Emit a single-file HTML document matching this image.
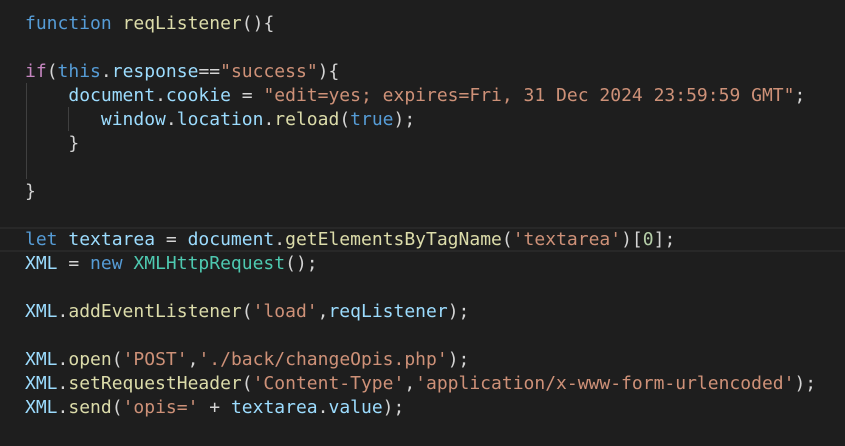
<!DOCTYPE html>
<html><head><style>
html,body{margin:0;padding:0;background:#1e1e1e;width:845px;height:446px;overflow:hidden}
pre{position:absolute;left:25px;top:12px;margin:0;font-family:"DejaVu Sans Mono","Liberation Mono",monospace;font-size:18px;line-height:24px;color:#d4d4d4}
.k{color:#569cd6}.f{color:#dcdcaa}.s{color:#ce9178}.v{color:#9cdcfe}.c{color:#c586c0}.t{color:#4ec9b0}.n{color:#b5cea8}
.hl{position:absolute;left:0;width:845px;top:227px;height:21px;border-top:2px solid #282828;border-bottom:2px solid #282828}
.g{position:absolute;width:1px;background:#404040}
</style></head><body>
<div class="hl"></div>
<div class="g" style="left:26px;top:83px;height:96px"></div>
<div class="g" style="left:68px;top:107px;height:24px"></div>
<pre><span class="k">function</span> <span class="f">reqListener</span>(){

<span class="c">if</span>(<span class="k">this</span>.<span class="v">response</span>==<span class="s">"success"</span>){
    <span class="v">document</span>.<span class="v">cookie</span> = <span class="s">"edit=yes; expires=Fri, 31 Dec 2024 23:59:59 GMT"</span>;
       <span class="v">window</span>.<span class="v">location</span>.<span class="f">reload</span>(<span class="k">true</span>);
    }

}

<span class="k">let</span> <span class="v">textarea</span> = <span class="v">document</span>.<span class="f">getElementsByTagName</span>(<span class="s">'textarea'</span>)[<span class="n">0</span>];
<span class="v">XML</span> = <span class="k">new</span> <span class="t">XMLHttpRequest</span>();

<span class="v">XML</span>.<span class="f">addEventListener</span>(<span class="s">'load'</span>,<span class="v">reqListener</span>);

<span class="v">XML</span>.<span class="f">open</span>(<span class="s">'POST'</span>,<span class="s">'./back/changeOpis.php'</span>);
<span class="v">XML</span>.<span class="f">setRequestHeader</span>(<span class="s">'Content-Type'</span>,<span class="s">'application/x-www-form-urlencoded'</span>);
<span class="v">XML</span>.<span class="f">send</span>(<span class="s">'opis='</span> + <span class="v">textarea</span>.<span class="v">value</span>);</pre>
</body></html>
